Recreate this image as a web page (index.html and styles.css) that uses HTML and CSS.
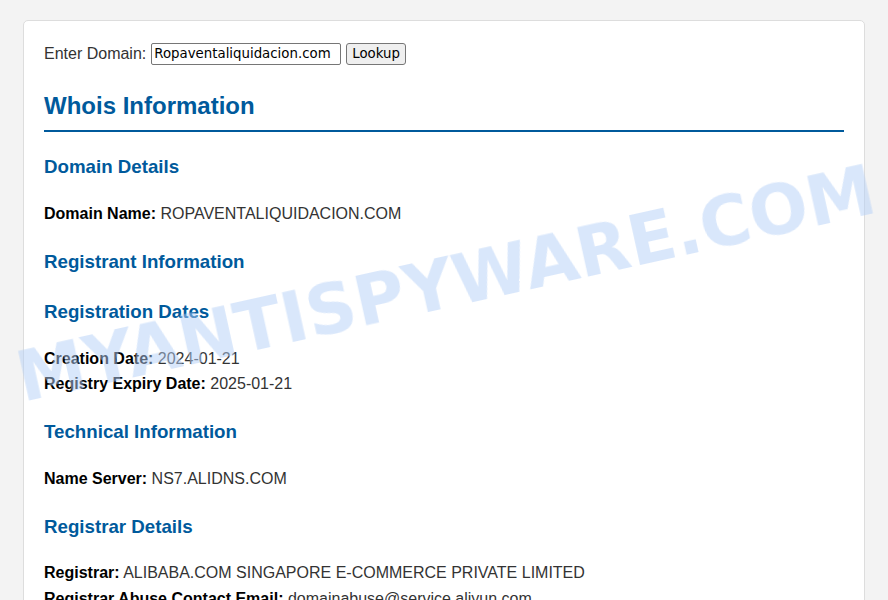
FILE: index.html
```html
<!DOCTYPE html>
<html lang="en">
<head>
  <meta charset="UTF-8" />
  <meta name="viewport" content="width=device-width, initial-scale=1.0"/>
  <title>Whois Lookup</title>
  <link rel="stylesheet" href="styles.css">
</head>
<body>
  <div class="container">
    <form class="lookup-form">
      <label for="domain">Enter Domain:</label>
      <input type="text" id="domain" value="Ropaventaliquidacion.com" />
      <button type="button">Lookup</button>
    </form>

    <h1>Whois Information</h1>

    <div class="section">
      <h2>Domain Details</h2>
      <div class="row"><strong>Domain Name:</strong> ROPAVENTALIQUIDACION.COM</div>
    </div>

    <div class="section">
      <h2>Registrant Information</h2>
    </div>

    <div class="section">
      <h2>Registration Dates</h2>
      <div class="row"><strong>Creation Date:</strong> 2024-01-21</div>
      <div class="row"><strong>Registry Expiry Date:</strong> 2025-01-21</div>
    </div>

    <div class="section">
      <h2>Technical Information</h2>
      <div class="row"><strong>Name Server:</strong> NS7.ALIDNS.COM</div>
    </div>

    <div class="section">
      <h2>Registrar Details</h2>
      <div class="row"><strong>Registrar:</strong> ALIBABA.COM SINGAPORE E-COMMERCE PRIVATE LIMITED</div>
      <div class="row"><strong>Registrar Abuse Contact Email:</strong> domainabuse@service.aliyun.com</div>
    </div>
  </div>

  <div class="watermark">MYANTISPYWARE.COM</div>
</body>
</html>
```

FILE: styles.css
```css
* {
  box-sizing: border-box;
}
html, body {
  margin: 0;
  padding: 0;
  background: #f3f3f3;
  font-family: "Liberation Sans", Arial, sans-serif;
  font-size: 16px;
  line-height: 1.6;
  color: #333;
}
body {
  padding-top: 20px;
  overflow: hidden;
}
.container {
  width: 842px;
  margin: 0 auto;
  padding: 20px;
  background: #fff;
  border: 1px solid #ddd;
  border-radius: 5px;
}
.lookup-form {
  display: flex;
  align-items: center;
  margin: 0;
}
.lookup-form label {
  margin-right: 5px;
}
.lookup-form input {
  width: 190px;
  height: 22px;
  padding: 1px 2px;
  border: 1px solid #767676;
  border-radius: 2px;
  font-family: "DejaVu Sans", sans-serif;
  font-size: 13.33px;
  color: #000;
}
.lookup-form button {
  margin-left: 5px;
  height: 22px;
  padding: 1px 5px;
  border: 1px solid #767676;
  border-radius: 3px;
  background: #efefef;
  font-family: "DejaVu Sans", sans-serif;
  font-size: 13.33px;
  color: #000;
}
h1 {
  margin: 25px 0 0;
  padding-bottom: 10px;
  border-bottom: 2px solid #005a9c;
  font-size: 24px;
  line-height: 1.2;
  color: #005a9c;
}
h2 {
  margin: 20px 0 19px;
  font-size: 18.72px;
  line-height: 1.6;
  color: #005a9c;
}
.row strong {
  color: #000;
}
.watermark {
  position: fixed;
  left: 446px;
  top: 284px;
  transform: translate(-50%, -50%) rotate(-12.5deg);
  font-family: "DejaVu Sans", sans-serif;
  font-weight: bold;
  font-size: 69px;
  line-height: 1;
  white-space: nowrap;
  color: rgba(180, 208, 248, 0.5);
  pointer-events: none;
}
```
